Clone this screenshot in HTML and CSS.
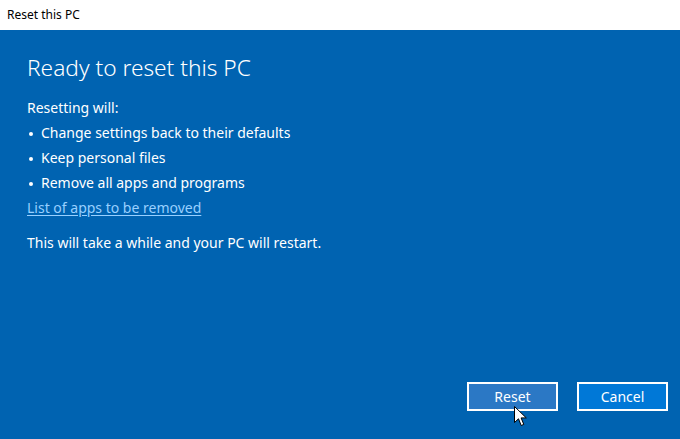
FILE: index.html
```html
<!DOCTYPE html>
<html>
<head>
<meta charset="utf-8">
<link rel="stylesheet" href="styles.css">
</head>
<body>
<div class="window">
  <div class="titlebar">Reset this PC</div>
  <div class="content">
    <div class="main">
      <h1 class="heading">Ready to reset this PC</h1>
      <p class="intro">Resetting will:</p>
      <ul class="list">
        <li>Change settings back to their defaults</li>
        <li>Keep personal files</li>
        <li>Remove all apps and programs</li>
      </ul>
      <a class="link" href="#">List of apps to be removed</a>
      <p class="note">This will take a while and your PC will restart.</p>
    </div>
    <div class="actions">
      <button class="btn btn-hover">Reset</button>
      <button class="btn">Cancel</button>
    </div>
  </div>
  <svg class="cursor" width="14" height="22" viewBox="0 0 14 22">
    <path d="M0.5 0.5 L0.5 16.5 L4.5 12.8 L7.2 19.5 L9.8 18.4 L7.1 11.9 L12.3 11.9 Z" fill="#fff" stroke="#000" stroke-width="1" stroke-linejoin="miter"/>
  </svg>
</div>
</body>
</html>
```
FILE: styles.css
```css
html, body {
  margin: 0;
  padding: 0;
}
body {
  width: 680px;
  height: 439px;
  overflow: hidden;
  font-family: "Noto Sans", "Open Sans", sans-serif;
}
.window {
  position: relative;
  width: 680px;
  height: 439px;
  display: flex;
  flex-direction: column;
  background: #0063b1;
}
.titlebar {
  height: 30px;
  background: #ffffff;
  color: #000;
  font-size: 12px;
  line-height: 30px;
  padding-left: 7px;
  flex: none;
}
.content {
  flex: 1;
  display: flex;
  flex-direction: column;
  justify-content: space-between;
  padding: 0 12px 28px 27px;
  color: #fff;
}
.heading {
  margin: 22px 0 0 0;
  font-weight: 300;
  font-size: 22.7px;
  line-height: 32px;
}
.intro, .note {
  margin: 0;
  font-size: 14px;
  line-height: 25px;
}
.intro {
  margin-top: 11px;
}
.list {
  list-style: none;
  margin: 0;
  padding: 0;
  font-size: 14px;
  line-height: 25px;
}
.list li {
  position: relative;
  padding-left: 14px;
}
.list li::before {
  content: "";
  position: absolute;
  left: 2px;
  top: 12px;
  width: 4px;
  height: 4px;
  border-radius: 50%;
  background: #fff;
}
.link {
  display: block;
  font-size: 14px;
  line-height: 25px;
  color: #99d0ff;
  text-decoration: underline;
  text-underline-offset: 2px;
}
.note {
  margin-top: 10px;
}
.actions {
  display: flex;
  justify-content: flex-end;
  gap: 19px;
}
.btn {
  width: 91px;
  height: 29px;
  border: 2px solid #fff;
  background: #0078d7;
  color: #fff;
  font-family: inherit;
  font-size: 14px;
  padding: 0;
}
.btn-hover {
  background: #2b78c5;
}
.cursor {
  position: absolute;
  left: 514px;
  top: 406px;
}
```
